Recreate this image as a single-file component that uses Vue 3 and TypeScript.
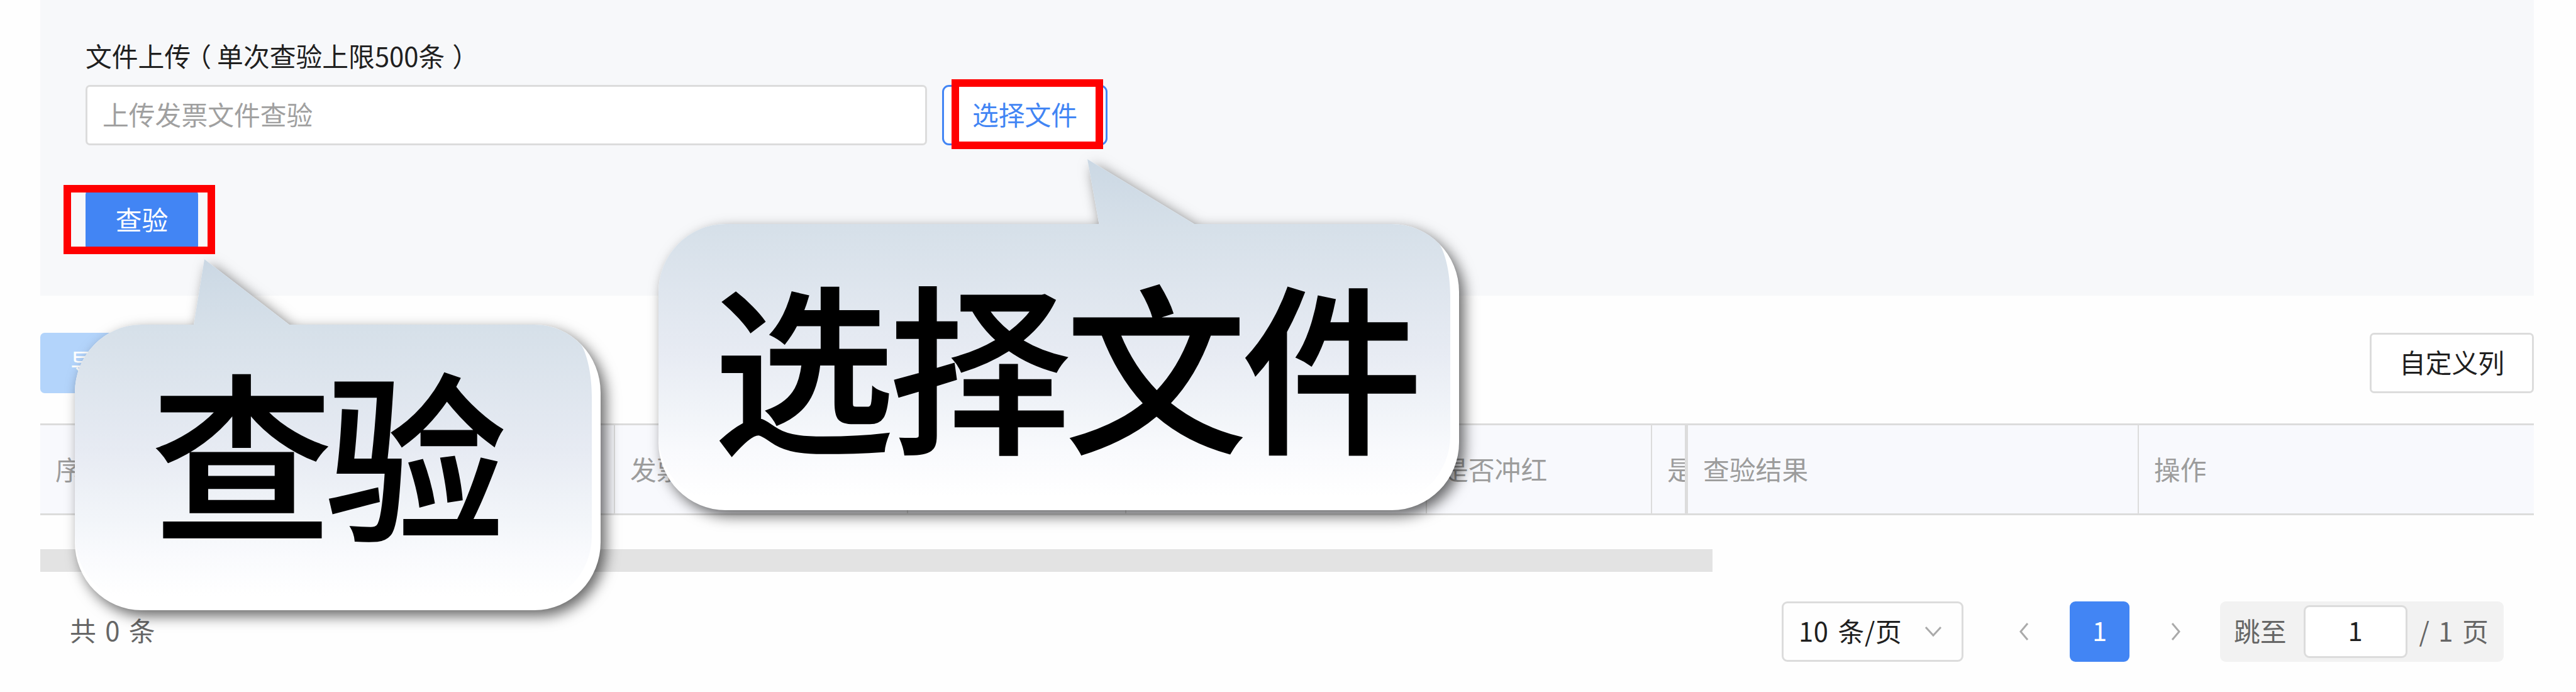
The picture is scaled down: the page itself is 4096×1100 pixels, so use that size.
<script setup lang="ts">
interface Column {
  title: string
  width: number
  kind?: 'clipped' | 'last'
}

interface Callout {
  name: string
  text: string
  shape: string
  face: string
  top: number
  bottom: number
  textX: number
  textY: number
  textLength: number
}

const columns: Column[] = [
  { title: '序号', width: 914 },
  { title: '发票代码', width: 466 },
  { title: '', width: 347 },
  { title: '', width: 478 },
  { title: '是否冲红', width: 358 },
  { title: '是', width: 57, kind: 'clipped' },
  { title: '查验结果', width: 717 },
  { title: '操作', width: 628, kind: 'last' },
]

const callouts: Callout[] = [
  {
    name: 'verify',
    text: '查验',
    shape:
      'M225 516H308L325 412L460 516H850A105 108 0 0 1 955 624V862A105 108 0 0 1 850 970H225A106 108 0 0 1 119 862V624A106 108 0 0 1 225 516Z',
    face:
      'M225 516H308L325 412L460 516H850A105 108 0 0 1 924 547.600C935 566 941 600 941 630V852A104 108 0 0 1 837 960H225A106 108 0 0 1 119 852V624A106 108 0 0 1 225 516Z',
    top: 412,
    bottom: 970,
    textX: 241,
    textY: 839,
    textLength: 564,
  },
  {
    name: 'choose',
    text: '选择文件',
    shape:
      'M1154 356H1747.500L1729 253L1899 356H2213A107 108 0 0 1 2320 464V703A107 108 0 0 1 2213 811H1154A107 108 0 0 1 1047 703V464A107 108 0 0 1 1154 356Z',
    face:
      'M1154 356H1747.500L1729 253L1899 356H2213A107 108 0 0 1 2288.700 387.600C2300 406 2306 440 2306 470V693A106 108 0 0 1 2200 801H1154A107 108 0 0 1 1047 693V464A107 108 0 0 1 1154 356Z',
    top: 253,
    bottom: 811,
    textX: 1134,
    textY: 699,
    textLength: 1128,
  },
]
</script>

<template>
  <div class="page">
    <section class="panel">
      <label class="label">文件上传<span class="open">（</span>单次查验上限500条<span class="close">）</span></label>
      <div class="upload">
        <div class="file-input">上传发票文件查验</div>
        <button class="btn outline">选择文件<i class="mark mark-choose"></i></button>
      </div>
      <button class="btn primary">查验<i class="mark mark-verify"></i></button>
    </section>

    <div class="toolbar">
      <button class="btn primary disabled">导出</button>
      <button class="btn plain">自定义列</button>
    </div>

    <div class="thead">
      <div
        v-for="(col, i) in columns"
        :key="i"
        class="th"
        :class="col.kind"
        :style="{ width: col.width + 'px' }"
      >{{ col.title }}</div>
    </div>
    <div class="scrollbar"></div>

    <footer class="footer">
      <span class="total">共 0 条</span>
      <div class="pager">
        <div class="size">
          <span>10 条/页</span>
          <svg width="28" height="18" viewBox="0 0 28 18"><path d="M2 2L14 15L26 2" /></svg>
        </div>
        <svg class="prev" width="16" height="30" viewBox="0 0 16 30"><path d="M14 2L3 15L14 28" /></svg>
        <span class="current">1</span>
        <svg class="next" width="16" height="30" viewBox="0 0 16 30"><path d="M2 2L13 15L2 28" /></svg>
        <div class="jump">
          <span>跳至</span>
          <span class="jump-input">1</span>
          <span>/ 1 页</span>
        </div>
      </div>
    </footer>

    <svg class="callouts" width="4096" height="1100" viewBox="0 0 4096 1100">
      <defs>
        <linearGradient
          v-for="c in callouts"
          :id="'fill-' + c.name"
          :key="c.name"
          gradientUnits="userSpaceOnUse"
          x1="0"
          :y1="c.top"
          x2="0"
          :y2="c.bottom"
        >
          <stop offset="0" stop-color="#cbd8e4" />
          <stop offset="0.2" stop-color="#d6e0e9" />
          <stop offset="0.55" stop-color="#e7ebf3" />
          <stop offset="0.74" stop-color="#f2f5f9" />
          <stop offset="0.84" stop-color="#f9fafd" />
          <stop offset="0.96" stop-color="#ffffff" />
        </linearGradient>
      </defs>
      <g v-for="c in callouts" :key="c.name">
        <path class="bubble" :d="c.shape" />
        <path :d="c.face" :fill="'url(#fill-' + c.name + ')'" />
        <text :x="c.textX" :y="c.textY" :textLength="c.textLength">{{ c.text }}</text>
      </g>
    </svg>
  </div>
</template>

<style>
body {
  margin: 0;
  background: #fff;
}
</style>

<style scoped>
.page {
  position: relative;
  box-sizing: border-box;
  width: 4096px;
  height: 1100px;
  padding: 0 67px 0 64px;
  overflow: hidden;
  background: #fefefe;
  font-family: "Noto Sans CJK SC", sans-serif;
  font-size: 41.8px;
  line-height: 60px;
  color: #1f1f1f;
}
.panel {
  box-sizing: border-box;
  height: 470px;
  padding: 58px 72px 0;
  background: #f7f8fa;
}
.label {
  display: block;
  height: 77px;
  white-space: nowrap;
}
.open,
.close {
  font-feature-settings: "halt";
}
.open {
  margin: 0 9px 0 12px;
}
.close {
  margin-left: 12px;
}
.upload {
  display: flex;
  gap: 24px;
  margin-bottom: 71px;
}
.file-input {
  box-sizing: border-box;
  width: 1338px;
  height: 96px;
  padding: 13px 24px;
  border: 3px solid #dcdcdc;
  border-radius: 7px;
  background: #fff;
  color: #a0a0a0;
}
.btn {
  position: relative;
  box-sizing: border-box;
  height: 96px;
  padding: 0 0 4px;
  border: 3px solid #dcdcdc;
  border-radius: 7px;
  background: #fff;
  font: inherit;
  color: inherit;
}
.outline {
  width: 263px;
  border-color: #4285f4;
  border-radius: 11px;
  color: #4285f4;
}
.primary {
  display: block;
  width: 179px;
  border-color: #4285f4;
  background: #4285f4;
  color: #fff;
}
.disabled {
  border-color: #b3d4fb;
  background: #b3d4fb;
}
.plain {
  width: 261px;
}
.mark {
  position: absolute;
  box-sizing: border-box;
  border: 12px solid #f00;
}
.mark-choose {
  left: 12px;
  top: -12px;
  width: 241px;
  height: 111px;
}
.mark-verify {
  left: -38px;
  top: -11px;
  width: 241px;
  height: 110px;
}
.toolbar {
  display: flex;
  justify-content: space-between;
  height: 96px;
  margin: 59px 0 48px;
}
.thead {
  display: flex;
  box-sizing: border-box;
  height: 146px;
  border: solid #dcdcdc;
  border-width: 3px 0;
  background: #f8f9fd;
}
.th {
  box-sizing: border-box;
  flex: none;
  padding-left: 24px;
  border-right: 2px solid #dcdcdc;
  line-height: 138px;
  color: #9c9c9c;
  white-space: nowrap;
  overflow: hidden;
}
.clipped {
  border-right-width: 5px;
}
.last {
  border-right: 0;
}
.scrollbar {
  width: 2659px;
  height: 36px;
  margin-top: 54px;
  background: #e3e3e3;
}
.footer {
  display: flex;
  justify-content: space-between;
  height: 96px;
  margin-top: 47px;
  padding: 0 48px 0 47px;
  line-height: 90px;
  word-spacing: 5px;
}
.total {
  color: #666;
}
.pager {
  display: flex;
  align-items: center;
}
.pager svg {
  fill: none;
  stroke: #aaa;
  stroke-width: 3px;
}
.size {
  display: flex;
  align-items: center;
  justify-content: space-between;
  box-sizing: border-box;
  width: 289px;
  height: 96px;
  padding: 0 31px 0 24px;
  border: 3px solid #dcdcdc;
  border-radius: 9px;
}
.size span,
.jump > span:not(.jump-input) {
  margin-top: -4px;
}
.size span {
  letter-spacing: 0.6px;
}
.prev {
  margin: 0 65px 0 88px;
}
.current {
  width: 95px;
  height: 96px;
  border-radius: 9px;
  background: #4285f4;
  color: #fff;
  text-align: center;
}
.next {
  margin: 0 62px 0 66px;
}
.jump {
  display: flex;
  align-items: center;
  box-sizing: border-box;
  width: 451px;
  height: 96px;
  padding-left: 22px;
  border-radius: 9px;
  background: #f2f2f2;
  color: #666;
  white-space: nowrap;
}
.jump-input {
  box-sizing: border-box;
  width: 165px;
  height: 84px;
  margin: 0 19px 0 27px;
  border: 3px solid #dcdcdc;
  border-radius: 9px;
  background: #fff;
  color: #1f1f1f;
  line-height: 72px;
  text-align: center;
}
.callouts {
  position: absolute;
  left: 0;
  top: 0;
}
.bubble {
  fill: #fff;
  filter: drop-shadow(8px 9px 11px rgba(0, 0, 0, 0.6));
}
.callouts text {
  font-size: 288px;
  font-weight: 500;
  fill: #000;
  stroke: #000;
  stroke-width: 2.5px;
}
</style>
